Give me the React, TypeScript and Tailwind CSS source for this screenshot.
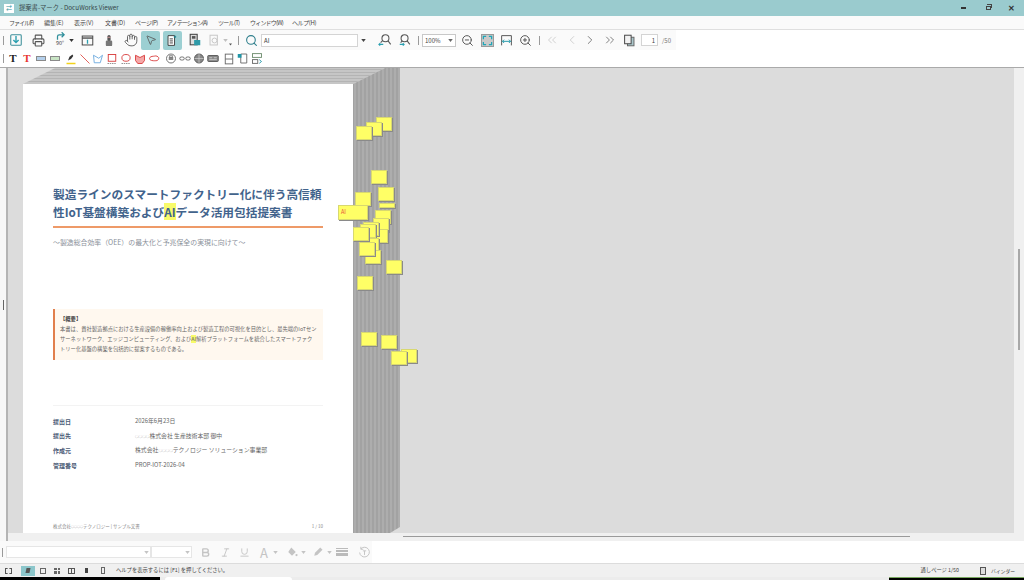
import type { ReactNode } from "react";
import {
  Bold,
  ChevronLeft,
  ChevronRight,
  ChevronsLeft,
  ChevronsRight,
  Hand,
  Italic,
  MousePointer2,
  Printer,
  Search,
  Underline,
  ZoomIn,
  ZoomOut,
} from "lucide-react";

const MENUS = [
  ["ファイル(F)", "w-[35px] tracking-[-1px]"],
  ["編集(E)", "w-[30px]"],
  ["表示(V)", "w-[31px]"],
  ["文書(D)", "w-[30px]"],
  ["ページ(P)", "w-[32px] tracking-[-0.5px]"],
  ["アノテーション(A)", "w-[51px] tracking-[-0.9px]"],
  ["ツール(T)", "w-[32px] tracking-[-0.7px]"],
  ["ウィンドウ(W)", "w-[42px] tracking-[-0.8px]"],
  ["ヘルプ(H)", "w-[40px] tracking-[-0.4px]"],
];

// x/y are relative to the canvas
const NOTES = [
  "left-[368px] top-[49px]",
  "left-[358px] top-[54px]",
  "left-[348px] top-[58px]",
  "left-[363px] top-[102px]",
  "left-[370px] top-[119px]",
  "left-[347px] top-[124px]",
  "left-[371px] top-[135px] !h-[5px]",
  "left-[367px] top-[142px]",
  "left-[365px] top-[150px]",
  "left-[364px] top-[161px]",
  "left-[355px] top-[154px]",
  "left-[352px] top-[156px]",
  "left-[355px] top-[170px]",
  "left-[357px] top-[182px]",
  "left-[351px] top-[174px]",
  "left-[345px] top-[159px]",
  "left-[378px] top-[192px]",
  "left-[349px] top-[208px]",
  "left-[353px] top-[264px]",
  "left-[373px] top-[267px]",
  "left-[393px] top-[281px]",
  "left-[383px] top-[283px]",
];

const META = [
  ["提出日", <>2026年6月23日</>],
  ["提出先", <><Dots />株式会社 生産技術本部 御中</>],
  ["作成元", <>株式会社<Dots />テクノロジー ソリューション事業部</>],
  ["管理番号", <>PROP-IOT-2026-04</>],
] as const;

function Dots() {
  return <span className="text-[3.6px] text-[#8f8f8f]">○○○○</span>;
}

function Slot({ className = "", children }: { className?: string; children: ReactNode }) {
  return <span className={`flex h-[16px] w-[16px] shrink-0 items-center justify-center ${className}`}>{children}</span>;
}

function Small({ className = "", children }: { className?: string; children: ReactNode }) {
  return <span className={`flex h-[12px] w-[12px] shrink-0 items-center justify-center ${className}`}>{children}</span>;
}

function Sep({ className = "" }: { className?: string }) {
  return <span className={`h-[9px] w-px shrink-0 bg-[#9a9a9a] ${className}`} />;
}

function Caret({ className = "" }: { className?: string }) {
  return (
    <svg viewBox="0 0 6 4" className={`h-[3px] w-[5px] shrink-0 ${className}`}>
      <path d="M0 0h6L3 4z" fill="currentColor" />
    </svg>
  );
}

function Svg({ size = 14, children }: { size?: number; children: ReactNode }) {
  return (
    <svg viewBox="0 0 16 16" width={size} height={size} fill="none" strokeWidth={1.2} stroke="currentColor">
      {children}
    </svg>
  );
}

function TopToolbar() {
  return (
    <div className="flex h-[20px] bg-white">
      <div className="flex w-[676px] items-center bg-[#fafafa] pl-[3px] text-[#555]">
        <Sep />
        <Slot className="ml-[4px]">
          <Svg size={14}>
            <rect x="2" y="2" width="12" height="12" rx="1" stroke="#3d8f9a" />
            <path d="M8 3.5v7M5 8l3 3 3-3" stroke="#2a9fb0" strokeWidth="1.6" />
          </Svg>
        </Slot>
        <Slot className="ml-[6px]">
          <Printer size={13} strokeWidth={2} />
        </Slot>
        <Slot className="ml-[6px]">
          <span className="relative flex h-[16px] w-[16px] flex-col items-center">
            <svg viewBox="0 0 12 9" className="h-[8px] w-[10px] text-[#2f8f9b]">
              <path d="M3 9V5a2 2 0 0 1 2-2h5M8 0l3 3-3 3" fill="none" stroke="currentColor" strokeWidth="1.5" />
            </svg>
            <span className="text-[5.5px] leading-[7px] text-[#444]">90°</span>
          </span>
        </Slot>
        <Caret className="ml-[1px] text-[#333]" />
        <Slot className="ml-[5px]">
          <Svg size={13}>
            <rect x="1.5" y="2.5" width="13" height="11" stroke="#444" />
            <path d="M1.5 5h13" stroke="#444" strokeWidth="1.6" />
            <path d="M8 7v5" stroke="#2a9fb0" strokeWidth="1.6" />
          </Svg>
        </Slot>
        <Slot className="ml-[6px]">
          <svg viewBox="0 0 10 16" className="h-[13px] w-[8px]">
            <rect x="3" y="1" width="4" height="8" rx="2" fill="#555" />
            <rect x="1" y="8" width="8" height="7" rx="1.5" fill="#777" />
            <path d="M3 4h4" stroke="#e5a5a5" />
          </svg>
        </Slot>
        <Slot className="ml-[6px]">
          <Hand size={14} strokeWidth={1.5} />
        </Slot>
        <Slot className="ml-[2px] !h-[19px] !w-[19px] rounded-[2px] bg-[#9ccfd2]">
          <MousePointer2 size={12} strokeWidth={1.6} />
        </Slot>
        <Slot className="ml-[3px] !h-[19px] !w-[19px] rounded-[2px] bg-[#9ccfd2]">
          <Svg size={13}>
            <path d="M2.5 2h8v12h-8z" fill="#fff" stroke="#444" />
            <path d="M4.5 6h4M4.5 8.5h4M4.5 11h4" stroke="#444" />
            <path d="M11 2v3M9.5 3.500h3" stroke="#18808c" />
          </Svg>
        </Slot>
        <Slot className="ml-[5px]">
          <Svg size={14}>
            <rect x="2.500" y="1.500" width="8" height="12" stroke="#444" fill="#ddd" />
            <rect x="4.500" y="3.500" width="4" height="3" fill="#555" stroke="none" />
            <rect x="7" y="8" width="7" height="6" fill="#2f9aa8" stroke="none" />
          </Svg>
        </Slot>
        <Slot className="ml-[3px] text-[#c6c6c6]">
          <Svg size={13}>
            <rect x="2.500" y="1.500" width="9" height="12" />
            <circle cx="8" cy="8" r="3" />
          </Svg>
        </Slot>
        <Caret className="ml-[1px] text-[#c0c0c0]" />
        <Caret className="ml-[1px] mt-[8px] !w-[3px] text-[#555]" />
        <Sep className="ml-[6px]" />
        <Slot className="ml-[4px] text-[#2f7f8c]">
          <Search size={13} strokeWidth={2} />
        </Slot>
        <span className="ml-[2px] flex h-[13px] w-[97px] items-center border border-[#d4d4d4] bg-white pl-[2px] text-[6px] text-[#333]">
          AI
        </span>
        <Caret className="ml-[3px] text-[#444]" />
        <Slot className="ml-[11px]">
          <Svg size={14}>
            <circle cx="8.500" cy="6" r="4" stroke="#555" />
            <path d="M11.500 9l3 4M5 9l-2 2" stroke="#555" />
            <path d="M1 13h5M2.500 11.500L1 13l1.500 1.500" stroke="#2a9fb0" />
          </Svg>
        </Slot>
        <Slot className="ml-[4px]">
          <Svg size={14}>
            <circle cx="7.500" cy="6" r="4" stroke="#555" />
            <path d="M10.500 9l3 4M5 9l-2 2" stroke="#555" />
            <path d="M2 13h5M5.500 11.500L7 13l-1.500 1.500" stroke="#2a9fb0" />
          </Svg>
        </Slot>
        <Sep className="ml-[5px]" />
        <span className="ml-[3px] flex h-[13px] w-[34px] items-center justify-between border border-[#c8c8c8] bg-white px-[2px] text-[6px] text-[#444]">
          100%
          <Caret className="text-[#666]" />
        </span>
        <Slot className="ml-[3px]">
          <ZoomOut size={13} strokeWidth={1.8} />
        </Slot>
        <Slot className="ml-[6px] !h-[13px] !w-[13px] border border-[#9a9a9a] bg-[#c9c9c9]">
          <Svg size={11}>
            <path d="M2 6V2h4M10 2h4v4M14 10v4h-4M6 14H2v-4" stroke="#1fa6b8" strokeWidth="1.800" />
          </Svg>
        </Slot>
        <Slot className="ml-[4px]">
          <Svg size={13}>
            <path d="M2 14V2h12v12" stroke="#555" />
            <path d="M3 9h10M3 9l2-2M3 9l2 2M13 9l-2-2M13 9l-2 2" stroke="#1f96a8" />
          </Svg>
        </Slot>
        <Slot className="ml-[3px]">
          <ZoomIn size={13} strokeWidth={1.8} />
        </Slot>
        <Sep className="ml-[6px]" />
        <Slot className="ml-[4px] text-[#c8c8c8]">
          <ChevronsLeft size={14} strokeWidth={1.4} />
        </Slot>
        <Slot className="ml-[4px] text-[#c8c8c8]">
          <ChevronLeft size={14} strokeWidth={1.4} />
        </Slot>
        <Slot className="ml-[2px] text-[#666]">
          <ChevronRight size={14} strokeWidth={1.4} />
        </Slot>
        <Slot className="ml-[4px] text-[#666]">
          <ChevronsRight size={14} strokeWidth={1.4} />
        </Slot>
        <Slot className="ml-[3px]">
          <Svg size={13}>
            <rect x="5.500" y="4" width="8" height="10.500" fill="#a9c6cb" stroke="#666" />
            <rect x="2" y="1.500" width="8" height="10.500" fill="#f2f2f2" stroke="#444" />
          </Svg>
        </Slot>
        <span className="ml-[4px] flex h-[12px] w-[17px] items-center justify-end border border-[#d4d4d4] bg-white pr-[2px] text-[6px] text-[#444]">
          1
        </span>
        <span className="ml-[4px] text-[6px] text-[#777]">/50</span>
      </div>
    </div>
  );
}

function AnnotationToolbar() {
  return (
    <div className="flex h-[17px] items-center bg-white pl-[3px] text-[#555]">
      <Sep />
      <Small className="ml-[3px] font-['Liberation_Serif',serif] text-[11px] font-bold text-[#222]">T</Small>
      <Small className="ml-[2px] font-['Liberation_Serif',serif] text-[11px] font-bold text-[#e8352f]">T</Small>
      <Small className="ml-[2px]">
        <span className="h-[5px] w-[10px] border border-[#8a8a8a] bg-[#b4d0ec]" />
      </Small>
      <Small className="ml-[2px]">
        <span className="h-[5px] w-[10px] border border-[#8a8a8a] bg-[#c8e4c4]" />
      </Small>
      <Small className="ml-[4px]">
        <Svg size={12}>
          <path d="M4 10l2-5 4-3 1 2-3 4z" fill="#333" stroke="none" />
          <path d="M2 14h12" stroke="#f2d21b" strokeWidth="2" />
        </Svg>
      </Small>
      <Small className="ml-[2px]">
        <Svg size={12}>
          <path d="M2 2l12 12" stroke="#e0504a" />
        </Svg>
      </Small>
      <Small className="ml-[1px]">
        <Svg size={12}>
          <path d="M2 3l1 10h8l3-10-5 4z" stroke="#6aa8de" />
        </Svg>
      </Small>
      <Small className="ml-[2px]">
        <Svg size={12}>
          <rect x="3" y="2" width="10" height="9" stroke="#d83a3a" />
          <path d="M2 14h12" stroke="#888" strokeDasharray="2 1" />
        </Svg>
      </Small>
      <Small className="ml-[2px]">
        <Svg size={12}>
          <ellipse cx="8" cy="6.500" rx="5.500" ry="4.500" stroke="#d83a3a" />
          <path d="M2 14h12" stroke="#888" strokeDasharray="2 1" />
        </Svg>
      </Small>
      <Small className="ml-[2px]">
        <Svg size={12}>
          <path d="M2 3l6 3 6-3v7l-3 4H5l-3-4z" fill="#f4a8a8" stroke="#d83a3a" />
        </Svg>
      </Small>
      <Small className="ml-[2px]">
        <Svg size={13}>
          <path d="M2 8c0-2 3-3 5-3s3-1 5 0 3 2 2 4-3 2-5 2-7 0-7-3z" stroke="#d83a3a" />
        </Svg>
      </Small>
      <Small className="ml-[5px]">
        <Svg size={13}>
          <circle cx="8" cy="8" r="6" stroke="#666" />
          <rect x="5" y="6" width="6" height="4" fill="#888" stroke="none" />
          <path d="M6 4h4v2H6z" stroke="#666" strokeWidth="0.800" />
        </Svg>
      </Small>
      <Small className="ml-[2px]">
        <Svg size={13}>
          <rect x="1" y="6" width="6" height="4" rx="2" stroke="#666" />
          <rect x="9" y="6" width="6" height="4" rx="2" stroke="#666" />
        </Svg>
      </Small>
      <Small className="ml-[2px]">
        <Svg size={13}>
          <circle cx="8" cy="8" r="6" fill="#888" stroke="#555" />
          <path d="M2 8h12M8 2v12" stroke="#ddd" strokeWidth="0.800" />
        </Svg>
      </Small>
      <Small className="ml-[2px]">
        <Svg size={13}>
          <rect x="1" y="4" width="14" height="8" rx="1" fill="#888" stroke="#555" />
          <path d="M3 7h4M9 7h4M3 9.500h10" stroke="#eee" strokeWidth="0.800" />
        </Svg>
      </Small>
      <Small className="ml-[4px]">
        <Svg size={12}>
          <rect x="3" y="1.500" width="10" height="13" stroke="#666" />
          <path d="M3 8h10" stroke="#666" />
        </Svg>
      </Small>
      <Small className="ml-[2px]">
        <Svg size={13}>
          <path d="M5 2h8v12H5z" stroke="#666" />
          <rect x="1" y="2" width="5" height="5" fill="#1f96a8" stroke="none" />
        </Svg>
      </Small>
      <Small className="ml-[2px]">
        <Svg size={13}>
          <rect x="2" y="1.500" width="12" height="5" stroke="#6a8a6a" />
          <rect x="2" y="9.500" width="7" height="5" stroke="#666" />
          <path d="M11 9.500l3 2.500-3 2.500" stroke="#1f96a8" />
        </Svg>
      </Small>
    </div>
  );
}

function PageStack() {
  return (
    <svg width="400" height="465" className="absolute left-0 top-0">
      <defs>
        <pattern id="side" width="4" height="4" patternUnits="userSpaceOnUse">
          <rect width="4" height="4" fill="#a2a2a2" />
          <rect x="2" width="2" height="4" fill="#adadad" />
        </pattern>
        <pattern id="top" width="4" height="3" patternUnits="userSpaceOnUse">
          <rect width="4" height="3" fill="#c6c6c6" />
          <rect y="1" width="4" height="1" fill="#b4b4b4" />
        </pattern>
      </defs>
      <path d="M15 16L47 0h330l-32 16z" fill="url(#top)" />
      <path d="M345 16L377 0h15v459l-10 6h-37z" fill="url(#side)" />
    </svg>
  );
}

function Page() {
  return (
    <div className="relative ml-[15px] mt-[16px] h-[449px] w-[330px] bg-white px-[30px] pt-[101px] font-['Noto_Sans_CJK_JP','Noto_Sans',sans-serif]">
      <h1 className="whitespace-nowrap pb-[5px] text-[11.7px] font-bold leading-[18px] text-[#42638c]">
        製造ラインのスマートファクトリー化に伴う高信頼
        <br />
        性IoT基盤構築および<mark className="bg-[#f8fb6a] text-[#42638c]">AI</mark>データ活用包括提案書
      </h1>
      <div className="h-[2px] bg-[#ee9a68]" />
      <p className="mt-[9px] whitespace-nowrap text-[6.9px] leading-[10px] text-[#8a8f99]">
        〜製造総合効率（OEE）の最大化と予兆保全の実現に向けて〜
      </p>
      <div className="mt-[62px] h-[51px] whitespace-nowrap border-l-2 border-[#e17f4d] bg-[#fff8ef] pl-[5px] pt-[5px] text-[5.3px] leading-[10px] text-[#666]">
        <p className="font-bold text-[#444]">【概要】</p>
        <p>
          本書は、貴社製造拠点における生産設備の稼働率向上および製造工程の可視化を目的とし、最先端のIoTセン
          <br />
          サーネットワーク、エッジコンピューティング、および<mark className="bg-[#f8fb6a] text-[#666]">AI</mark>解析プラットフォームを統合したスマートファク
          <br />
          トリー化基盤の構築を包括的に提案するものである。
        </p>
      </div>
      <div className="mt-[45px] border-t border-[#f3f3f3] pt-[8px]">
        {META.map(([label, value]) => (
          <div key={label} className="flex h-[14.6px] items-center text-[5.85px] text-[#666]">
            <span className="w-[82px] text-[6px] font-bold text-[#4a5a75]">{label}</span>
            <span>{value}</span>
          </div>
        ))}
      </div>
      <div className="mt-[50px] flex justify-between text-[4.5px] leading-[8px] text-[#888]">
        <span>株式会社<span className="text-[3px] text-[#999]">○○○○</span>テクノロジー | サンプル文書</span>
        <span>1 / 10</span>
      </div>
    </div>
  );
}

function BottomToolbar() {
  return (
    <div className="flex h-[22px] bg-white">
      <div className="flex w-[372px] items-center bg-[#fafafa] pl-[2px] text-[#c4c4c4]">
        <Sep />
        <span className="ml-[3px] flex h-[12px] w-[146px] items-center justify-end border border-[#e6e6e6] bg-white pr-[1px]">
          <Caret />
        </span>
        <span className="flex h-[12px] w-[41px] items-center justify-end border border-[#e6e6e6] bg-white pr-[1px]">
          <Caret />
        </span>
        <Slot className="ml-[5px]"><Bold size={11} strokeWidth={3} /></Slot>
        <Slot className="ml-[4px]"><Italic size={11} /></Slot>
        <Slot className="ml-[3px]"><Underline size={11} /></Slot>
        <Slot className="ml-[4px] text-[13px] leading-none">A</Slot>
        <Caret className="ml-[1px]" />
        <Slot className="ml-[6px]">
          <Svg size={12}>
            <path d="M7 2l6 6-5 5-5-5z" fill="currentColor" stroke="none" />
            <circle cx="14" cy="12" r="1.500" fill="currentColor" stroke="none" />
          </Svg>
        </Slot>
        <Caret className="ml-[1px]" />
        <Slot className="ml-[4px]">
          <Svg size={12}>
            <path d="M3 13l1-4 7-7 3 3-7 7z" fill="currentColor" stroke="none" />
          </Svg>
        </Slot>
        <Caret className="ml-[1px]" />
        <Slot className="ml-[2px]">
          <span className="flex w-[12px] flex-col gap-[1px]">
            <span className="h-[1px] bg-[#bbb]" />
            <span className="h-[2px] bg-[#bbb]" />
            <span className="h-[3px] bg-[#bbb]" />
          </span>
        </Slot>
        <Slot className="ml-[6px]">
          <Svg size={13}>
            <path d="M3.500 3.500A6 6 0 1 1 2 8M3.500 1v3h3" />
            <path d="M6 6h4M8 6v5" />
          </Svg>
        </Slot>
      </div>
    </div>
  );
}

function StatusBar() {
  return (
    <div className="flex h-[14px] items-center border-t border-[#dcdcdc] bg-[#f0f0f0] text-[#555]">
      <span className="ml-[5px] h-[6px] w-[7px] border border-dashed border-[#555]" />
      <span className="ml-[9px] flex h-[10px] w-[14px] items-center justify-center bg-[#8cc6cb]">
        <span className="h-[5px] w-[4px] -skew-x-12 bg-[#555]" />
      </span>
      <span className="ml-[5px] h-[6px] w-[6px] border border-[#666]" />
      <span className="ml-[8px] grid h-[6px] w-[6px] grid-cols-2 gap-[1px]">
        <i className="bg-[#666]" /><i className="bg-[#666]" /><i className="bg-[#666]" /><i className="bg-[#666]" />
      </span>
      <span className="ml-[8px] flex h-[6px] w-[7px] justify-center border border-[#555]">
        <i className="h-full w-px bg-[#555]" />
      </span>
      <span className="ml-[10px] h-[5px] w-[3px] bg-[#444]" />
      <span className="ml-[13px] h-[7px] w-[4px] border border-[#666]" />
      <span className="ml-[11px] whitespace-nowrap text-[5.3px] text-[#444]">ヘルプを表示するには [F1] を押してください。</span>
      <span className="ml-auto whitespace-nowrap text-[5.3px] text-[#444]">通しページ 1/50</span>
      <span className="ml-[21px] h-[8px] w-[6px] border border-[#555] bg-[#ddd]" />
      <span className="ml-[5px] mr-[9px] whitespace-nowrap text-[4.8px] text-[#444]">バインダー</span>
    </div>
  );
}

export default function App() {
  return (
    <div className="flex h-[580px] w-[1024px] flex-col overflow-hidden bg-white font-['Noto_Sans_CJK_JP','Noto_Sans',sans-serif]">
      {/* title bar */}
      <div className="flex h-[16px] items-center bg-[#9acbce] pl-[4px] text-[#37474a]">
        <span className="flex h-[9px] w-[10px] items-center justify-center bg-white text-[6px] leading-none text-[#2f8f9b]">⇄</span>
        <span className="ml-[5px] whitespace-nowrap text-[6.3px]">提案書-マーク - DocuWorks Viewer</span>
        <div className="ml-auto flex items-center pr-[9px] text-[#333]">
          <span className="h-[1.500px] w-[5px] bg-[#333]" />
          <span className="relative ml-[20px] h-[4px] w-[5px] border border-[#444]">
            <span className="absolute -right-[2px] -top-[3px] h-[4px] w-[5px] border-r border-t border-[#444]" />
          </span>
          <span className="ml-[17px] text-[8px] font-bold leading-none">✕</span>
        </div>
      </div>
      {/* menu */}
      <div className="flex h-[14px] items-center border-b border-[#dfdfdf] bg-[#fafafa] pl-[9px] text-[6px] text-[#444]">
        {MENUS.map(([label, width]) => (
          <span key={label} className={`${width} whitespace-nowrap`}>{label}</span>
        ))}
      </div>
      <TopToolbar />
      <AnnotationToolbar />
      <div className="h-px bg-[#aaaaaa]" />

      <div className="flex min-h-0 flex-1 flex-col">
        <div className="flex h-[473px]">
          <div className="relative w-[8px] shrink-0 border-r-2 border-[#b4b4b4] bg-[#f7f7f7]">
            <span className="absolute left-[3px] top-[232px] h-[10px] w-px bg-[#666]" />
          </div>
          <div className="flex min-w-0 flex-1 flex-col">
            <div className="flex h-[465px]">
              <div className="relative flex-1 overflow-hidden bg-[#dcdcdc]">
                <PageStack />
                <Page />
                {NOTES.map((pos) => (
                  <span
                    key={pos}
                    className={`absolute h-[14px] w-[16px] border border-[#d8d870] bg-[#ffff66] shadow-[1px_1px_0_#8a8a8a] ${pos}`}
                  />
                ))}
                <span className="absolute left-[330px] top-[137px] flex h-[15px] w-[30px] items-center border border-[#d8d870] bg-[#ffff66] pl-[2px] text-[5.500px] text-[#e8503a] shadow-[1px_1px_0_#8a8a8a]">
                  AI
                </span>
              </div>
              <div className="flex w-[10px] shrink-0 bg-[#f0f0f0] pl-[4px] pt-[181px]">
                <span className="h-[101px] w-[2px] bg-[#a8a8a8]" />
              </div>
            </div>
            <div className="h-[8px] bg-[#f0f0f0] pl-[395px] pt-[3px]">
              <div className="h-px w-[507px] bg-[#9a9a9a]" />
            </div>
          </div>
        </div>
        <BottomToolbar />
        <StatusBar />
        {/* taskbar sliver */}
        <div className="flex h-[3px] bg-[#ececec]">
          <span className="w-[160px] bg-black" />
          <span className="ml-[5px] w-[127px] rounded-t-[3px] bg-white" />
          <span className="ml-auto w-[135px] border-t border-[#7aa860] bg-black" />
        </div>
      </div>
    </div>
  );
}
